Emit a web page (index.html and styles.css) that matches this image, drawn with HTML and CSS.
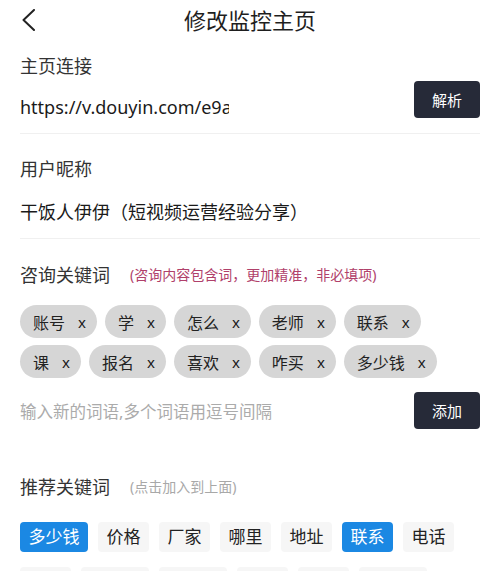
FILE: index.html
```html
<!DOCTYPE html>
<html lang="zh-CN">
<head>
<meta charset="utf-8">
<title>修改监控主页</title>
<link rel="stylesheet" href="styles.css">
</head>
<body>
<div class="page">
  <header class="nav">
    <span class="back">
      <svg width="16" height="22" viewBox="0 0 16 22"><path d="M13 1 L2.5 11 L13 21" fill="none" stroke="#222" stroke-width="2" stroke-linecap="round" stroke-linejoin="round"/></svg>
    </span>
    <h1 class="title">修改监控主页</h1>
    <span></span>
  </header>

  <div class="label first">主页连接</div>
  <div class="row url-row">
    <div class="url">https://v.douyin.com/e9ac</div>
    <button class="btn">解析</button>
  </div>
  <div class="divider d1"></div>

  <div class="label l2">用户昵称</div>
  <div class="nick">干饭人伊伊（短视频运营经验分享）</div>
  <div class="divider d2"></div>

  <div class="label l3">咨询关键词<span class="hint red">(咨询内容包含词，更加精准，非必填项)</span></div>
  <div class="tags">
    <span class="tag">账号<span class="x">x</span></span>
    <span class="tag">学<span class="x">x</span></span>
    <span class="tag">怎么<span class="x">x</span></span>
    <span class="tag">老师<span class="x">x</span></span>
    <span class="tag">联系<span class="x">x</span></span>
    <span class="tag">课<span class="x">x</span></span>
    <span class="tag">报名<span class="x">x</span></span>
    <span class="tag">喜欢<span class="x">x</span></span>
    <span class="tag">咋买<span class="x">x</span></span>
    <span class="tag">多少钱<span class="x">x</span></span>
  </div>
  <div class="row add-row">
    <div class="placeholder">输入新的词语,多个词语用逗号间隔</div>
    <button class="btn">添加</button>
  </div>

  <div class="label l4">推荐关键词<span class="hint grey">(点击加入到上面)</span></div>
  <div class="recs">
    <span class="rec on">多少钱</span>
    <span class="rec">价格</span>
    <span class="rec">厂家</span>
    <span class="rec">哪里</span>
    <span class="rec">地址</span>
    <span class="rec on">联系</span>
    <span class="rec">电话</span>
    <span class="rec">购买</span>
    <span class="rec">怎么买</span>
    <span class="rec">怎么卖</span>
    <span class="rec">优惠</span>
    <span class="rec">手机</span>
    <span class="rec">感兴趣</span>
  </div>
</div>
</body>
</html>
```

FILE: styles.css
```css
html, body {
  margin: 0;
  padding: 0;
  background: #ffffff;
}
body {
  font-family: "Noto Sans", "Noto Sans CJK SC", sans-serif;
  color: #222;
  overflow: hidden;
}
.page {
  padding: 0 20px;
  width: 460px;
}
.nav {
  display: grid;
  grid-template-columns: 1fr auto 1fr;
  align-items: center;
  height: 40px;
}
.back {
  display: flex;
  align-items: center;
  padding-left: 1px;
}
.title {
  margin: 0;
  font-size: 22px;
  font-weight: 400;
  line-height: 40px;
  color: #1e1e1e;
}
.label {
  font-size: 18px;
  line-height: 24px;
  color: #333;
  display: flex;
  align-items: center;
}
.label.first { margin-top: 14px; }
.label.l2 { margin-top: 23px; }
.label.l3 { margin-top: 24px; }
.label.l4 { margin-top: 46px; }
.hint {
  font-size: 14px;
  margin-left: 20px;
}
.hint.red { color: #b0406a; }
.hint.grey { color: #a8a8a8; }
.row {
  display: flex;
  justify-content: space-between;
  align-items: flex-start;
}
.url-row { margin-top: 3px; height: 37px; }
.url {
  font-size: 18px;
  line-height: 24px;
  margin-top: 14px;
  width: 209px;
  overflow: hidden;
  white-space: nowrap;
  color: #1a1a1a;
}
.btn {
  width: 66px;
  height: 37px;
  border: none;
  border-radius: 4px;
  background: #262a38;
  color: #fff;
  font-family: "Noto Sans CJK SC", sans-serif;
  font-size: 15px;
  padding: 0;
}
.divider {
  height: 1px;
  background: #f0f0f0;
}
.d1 { margin-top: 15px; }
.d2 { margin-top: 13px; }
.nick {
  margin-top: 18px;
  font-size: 18px;
  line-height: 26px;
  color: #1a1a1a;
}
.tags {
  margin-top: 18px;
  display: flex;
  flex-wrap: wrap;
  column-gap: 8px;
  row-gap: 7px;
  width: 440px;
}
.tag {
  display: inline-flex;
  align-items: center;
  height: 33px;
  border-radius: 17px;
  background: #d6d6d6;
  padding: 0 11px 0 13px;
  font-size: 16px;
  color: #222;
}
.tag .x {
  margin-left: 13px;
  font-size: 15px;
  font-family: "Noto Sans", sans-serif;
  color: #1a1a1a;
}
.add-row { margin-top: 14px; height: 37px; align-items: center; }
.placeholder {
  font-size: 16.5px;
  color: #ababab;
}
.recs {
  margin-top: 23px;
  display: flex;
  flex-wrap: wrap;
  column-gap: 10px;
  row-gap: 15px;
  width: 440px;
}
.rec {
  height: 30px;
  line-height: 30px;
  padding: 0 8.5px;
  border-radius: 4px;
  background: #f6f6f6;
  font-size: 17px;
  color: #222;
}
.rec.on {
  background: #1b88e3;
  color: #fff;
}
```
